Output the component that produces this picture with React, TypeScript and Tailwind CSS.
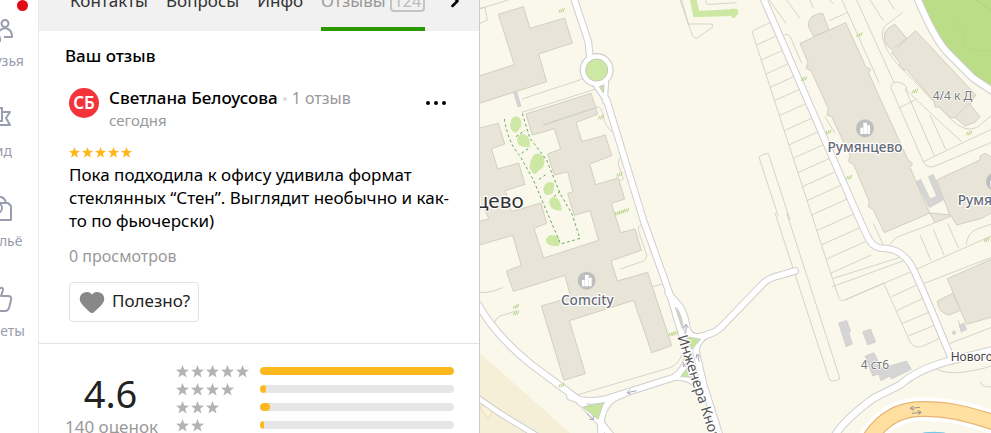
import React from "react";
import { ChevronRight, Heart } from "lucide-react";

const navItems = [
  {
    label: "Друзья",
    paths: ["M5-10a3 3 0 1 1 0 7a3 3 0 1 1 0-7", "M-1 1Q4-3 8-1Q12 1 12 7H4", "M-6-5a3 3 0 1 1 0 7a3 3 0 1 1 0-7", "M-13 11Q-13 5-6 5T0 11Z"],
  },
  { label: "Гид", paths: ["M3-8H10L6-2L10 5H-4V1", "M-11 12V-12H2V1H-11"] },
  {
    label: "Жильё",
    paths: ["M-11-7H8L11-4V10H-11Z", "M-5-7Q-4-13 1-13Q5-12 6-7", "M-3-7a5 5 0 1 1 0 10a5 5 0 1 1 0-10"],
  },
  { label: "Советы", paths: ["M-12-3H-7L-1-11Q3-14 3-10L1-4H8Q12-4 11 0L9 8Q8 11 5 11H-12Z"] },
];

const tabs = ["Контакты", "Вопросы", "Инфо"];

const ratings = [
  { stars: 5, share: 100 },
  { stars: 4, share: 3 },
  { stars: 3, share: 5 },
  { stars: 2, share: 2 },
];

function Stars({ count, className }: { count: number; className: string }) {
  return (
    <span className={`flex ${className}`} role="img" aria-label={`${count} из 5`}>
      {Array.from({ length: count }, (_, i) => (
        <svg key={i} viewBox="0 0 24 24" className="h-full w-auto" fill="currentColor">
          <path d="M12 0l3.2 8.4 8.8.4-7 5.5 2.5 8.9L12 18.2 4.5 23.2 7 14.3 0 8.8l8.8-.4z" />
        </svg>
      ))}
    </span>
  );
}

function Sidebar() {
  return (
    <nav className="relative -ml-[38px] w-[77px] shrink-0 overflow-hidden border-r border-[#e9e9ec] bg-white pt-4">
      <span className="absolute top-0 right-[10px] size-[11px] rounded-full bg-[#e30b13]" />
      {navItems.map(({ label, paths }) => (
        <a key={label} href="#" className="flex h-[90px] flex-col items-center gap-[7px] text-sm text-[#9a9caf]">
          <svg viewBox="-14 -14 28 28" className="size-7" fill="none" stroke="currentColor" strokeWidth="2" strokeLinejoin="round">
            {paths.map((d) => <path key={d} d={d} />)}
          </svg>
          <span className="leading-5">{label}</span>
        </a>
      ))}
    </nav>
  );
}

function Tabs() {
  return (
    <div className="flex h-[31px] shrink-0 items-end gap-[18px] overflow-hidden bg-[#f1f1f1] pr-[14px] pl-[31px]">
      {tabs.map((t) => (
        <button key={t} className="h-[60px] text-[17px] text-[#333]">{t}</button>
      ))}
      <button className="flex h-[60px] items-center gap-1 border-b-4 border-[#2b9900] pt-1 text-[17px] text-[#999]">
        Отзывы
        <span className="rounded border-2 border-[#c4c4c4] px-[2px] text-base leading-[18px] text-[#bbb]">124</span>
      </button>
      <button aria-label="Далее" className="ml-auto flex h-[60px] items-center text-black">
        <ChevronRight className="size-5" strokeWidth={3} />
      </button>
    </div>
  );
}

function Review() {
  return (
    <section className="border-b border-[#e2e2e2] pr-6 pb-[21px] pl-[30px] text-[17px]">
      <h2 className="-ml-1 pt-[13px] leading-6 font-medium text-black">Ваш отзыв</h2>
      <div className="mt-[18px] flex gap-[10px] pr-2">
        <div className="mt-[2px] flex size-[30px] shrink-0 items-center justify-center rounded-full bg-[#f5333b] font-semibold text-white">СБ</div>
        <div className="flex-1">
          <p className="leading-6 text-[#999]">
            <span className="font-medium text-black">Светлана Белоусова</span>
            <span className="mx-[5px] inline-block size-1 rounded-full bg-[#ddd] align-middle" />
            <span className="text-base leading-6">1 отзыв</span>
          </p>
          <p className="text-[15px] leading-[21px] text-[#999]">сегодня</p>
        </div>
        <button aria-label="Ещё" className="flex h-[34px] items-center text-black">
          <svg viewBox="0 0 22 6" className="h-[6px] w-[22px]" fill="currentColor">
            <circle cx="3" cy="3" r="2" />
            <circle cx="11" cy="3" r="2" />
            <circle cx="19" cy="3" r="2" />
          </svg>
        </button>
      </div>
      <Stars count={5} className="mt-4 h-[11px] gap-[2px] text-[#ffb81c]" />
      <p className="mt-[5px] leading-[23px] text-black">
        Пока подходила к офису удивила формат стеклянных “Стен”. Выглядит необычно и как-то по фьючерски)
      </p>
      <p className="mt-3 text-base leading-6 text-[#999]">0 просмотров</p>
      <button className="mt-[14px] flex h-10 items-center gap-[6px] rounded border border-[#e2e2e2] px-2 text-[#222]">
        <Heart className="size-7" fill="#888" stroke="#888" strokeWidth={1} />
        <span className="pb-[3px]">Полезно?</span>
      </button>
    </section>
  );
}

function Summary() {
  return (
    <section className="flex pt-[18px] pr-[25px] pl-[26px]">
      <div className="w-[91px] text-center">
        <p className="pt-[9px] text-[38px] leading-[44px] text-[#222]">4.6</p>
        <p className="text-[17px] leading-6 whitespace-nowrap text-[#999]">140 оценок</p>
      </div>
      <ul className="ml-5 flex-1">
        {ratings.map((r) => (
          <li key={r.stars} className="flex h-[18px] items-center">
            <span className="w-21 shrink-0">
              <Stars count={r.stars} className="h-[13px] gap-[2px] text-[#b3b3b3]" />
            </span>
            <span className="h-2 flex-1 overflow-hidden rounded bg-[#e6e6e6]">
              <span className="block h-2 rounded bg-[#ffb81c]" style={{ width: `${r.share}%` }} />
            </span>
          </li>
        ))}
      </ul>
    </section>
  );
}

const buildings = [
  "M55 43L130 20 150 85 254 54 277 129 176 162 200 245-5 311V229L103 194Z",
  "M-5 385L55 370 74 432 34 446 53 507 116 489 135 553 76 572 94 635 183 609 200 670 162 685 191 774 356 721 330 632 283 646 263 580 279 575 263 515 223 525 203 462 242 447 223 386 157 405 138 342 333 280 353 343 288 367 306 425 376 405 395 467 329 492 347 554 415 534 434 597 394 610 422 698 465 687 484 751 393 782 412 843 503 817 575 1037 515 1058 461 901 268 962 316 1121 252 1141 184 918 272 892 255 826 100 874 79 813 124 796 98 706-5 736V664L27 657 12 625-5 630Z",
  "M1000 108L985 78Q985 42 1028 40L1048 92Z",
  "M960 130L1097 68 1157 200 1172 208 1166 220 1284 480 1298 490 1290 502 1347 635 1365 668 1410 650 1400 620 1370 540 1500 480 1500 468 1515 460 1540 475V635L1505 655 1430 675 1412 645 1350 639 1213 698 1180 630 1165 620 1168 605 1122 495 1106 485 1110 468 1055 350 1041 345 1045 325 993 212 978 205 984 187Z",
  "M1280 115L1245 73Q1200 90 1218 132L1235 150Z",
  "M1235 158L1307 92 1487 285 1472 310 1425 352 1412 354 1378 320 1366 322 1363 305 1280 209 1270 210 1258 198 1260 188Z",
  "M1425 352L1468 310 1500 350 1486 366 1455 378Z",
  "M1402 836L1540 775V950L1460 973 1442 932Z",
  "M1372 903L1418 880 1442 930 1408 945Q1375 940 1372 903Z",
];

const roads: [string, number][] = [
  ["M280-10L325 125 330 175", 17],
  ["M350 255L380 300 490 660 570 884 610 1020", 17],
  ["M375 305L379 245", 11],
  ["M565 880L600 920Q615 945 620 980T660 1010Q695 1005 720 985L850 850Q865 835 900 826L945 813", 17],
  ["M690 1000Q650 1015 648 1055L670 1150 720 1310", 17],
  ["M-5 915Q50 1010 150 1090L270 1180Q320 1215 400 1315", 18],
  ["M270 1190Q330 1215 400 1190L580 1133Q615 1115 630 1050", 17],
  ["M580 1133Q640 1128 665 1180", 13],
  ["M365 1310Q350 1205 430 1183", 17],
  ["M-5 1195L60 1240 175 1310", 14],
  ["M850-5L1130 639 1160 705Q1175 740 1200 744C1240 745 1265 755 1290 790Q1305 810 1412 1070", 17],
  ["M1310-10Q1360 110 1400 155L1480 235 1540 275", 18],
  ["M1060 1315Q1085 1265 1180 1195L1260 1155Q1310 1110 1400 1085L1540 1050", 19],
];

const thinLines = [
  "M126 297L305 238M126 337L345 268M190 375L350 320Q365 320 370 350T400 398",
  "M0 26L85 0M0 25 15 22 22 60 0 70",
  "M430 470Q412 475 415 495L428 530Q433 545 418 540",
  "M485 675Q472 676 476 695L500 765Q500 780 485 785L420 808M520 860L545 852",
  "M0 877Q20 882 68 863M43 975Q45 950 70 945L112 932M280 1188L570 1103Q600 1090 608 1055",
  "M600 0L635 100Q640 120 655 112L697 82V72H625L605 0M678 0Q675 15 690 13L770 8",
  "M818 95Q810 95 870 68M816 95L1075 890Q1080 905 1095 900L1210 850",
  "M895 650L838 475Q835 465 865 460L930 660M885 639L1047 1135Q1050 1150 1078 1138V1130L920 639",
  "M868 0L918 70M920 0L960 55M990 0L1000 25M1050 0L1060 12M1086 0L1197 248M1048 62L1103 37M1130 0L1243 250M1170 0L1210 62M1225 0L1243 28",
  "M910 108Q925 95 933 115L965 190M1035 350L1065 400",
  "M1268 37L1215 78Q1200 95 1213 130Q1225 170 1290 230L1400 345Q1460 410 1500 375L1540 342",
  "M1232 262Q1237 240 1260 248T1280 270L1310 300Q1400 385 1445 425M1232 262L1330 485Q1340 505 1360 500L1540 425M1330 485L1540 385M1255 325L1305 300M1275 265L1363 467M1350 345L1398 450",
  "M1055 861L1290 775M1060 835L1260 772M1095 900L1300 812 1540 705M1320 855L1540 770",
  "M1210 847L1290 1025Q1300 1045 1325 1040L1385 1012M1235 890L1315 853M1250 932L1330 895M1267 970L1345 938M1285 1008L1365 975",
  "M1320 705L1353 782M1360 688L1392 765M1403 670L1436 745M1227 740Q1240 715 1260 708L1365 668M1458 735Q1465 695 1490 688L1540 670M1180 670L1210 735",
  "M1410 1030L1540 980M1365 1105Q1400 1125 1460 1115T1540 1095M1500 1145Q1510 1165 1535 1160M1435 960L1445 1000",
];

const rungs = [135, 180, 222, 262, 302, 347, 392, 435, 475, 518, 560, 602, 645, 692, 735, 778, 820].map((y) => {
  const x = 816 + (y - 95) * 0.325;
  const end = (838 + 0.4386 * (y + 0.45 * x)) / 1.197;
  return `M${x} ${y}L${end} ${y - 0.45 * (end - x)}`;
});

const hatches = [[245, 32], [363, 352], [418, 524], [412, 640], [425, 636], [438, 632], [972, 237], [1045, 397], [1107, 533], [1138, 105], [1305, 274], [1467, 400], [574, 1003], [586, 1000], [108, 920], [108, 940], [245, 1156], [1520, 720]];

function Pin({ x, y }: { x: number; y: number }) {
  return (
    <g transform={`translate(${x} ${y})`}>
      <circle r="27" fill="#bebebe" />
      <path d="M-14-2h8v19h-8zM-5-17H6v34H-5zM7-9h8v26H7z" fill="#fff" />
    </g>
  );
}

function CityMap() {
  const label = { stroke: "#fff", strokeWidth: 7, paintOrder: "stroke", strokeLinejoin: "round" as const };
  return (
    <svg viewBox="0 0 1533 1299" preserveAspectRatio="xMinYMin slice" className="block size-full" role="img" aria-label="Карта">
      <rect width="4000" height="4000" fill="#faf8ea" />
      <path d="M-5 1055L270 1299H-5Z" fill="#f5efd8" />
      <path d="M2 1225L14 1205 40 1228 25 1258Z" fill="#fdf3da" stroke="#ebdcb5" strokeWidth="3" />
      <path d="M1320-5Q1370 110 1410 150L1490 230 1540 260V-5Z" fill="#bbdd87" />
      <path d="M1480-5L1540 35" fill="none" stroke="#b0cf80" strokeWidth="3" />
      <path d="M1410 60Q1460 80 1450 120T1540 150" fill="none" stroke="#b6d983" strokeWidth="3" />
      <g fill="none" stroke="#cbccc2" strokeWidth="2.5">
        {thinLines.concat(rungs).map((d) => <path key={d} d={d} />)}
      </g>
      <path d="M630 0H650L658 33 755 27 762 25 776 38 763 55 755 48 640 52Z" fill="#cde8a4" />
      <path d="M750 27L774 28V42L756 55Z" fill="#cde8a4" />
      <g fill="#e8e5d8" stroke="#d3cfc0" strokeWidth="3" strokeLinejoin="round">
        {buildings.map((d) => <path key={d} d={d} />)}
      </g>
      <path d="M190 375L350 322" stroke="#d0d0ce" strokeWidth="4" />
      <g fill="#d5d5d5" stroke="#cacaca" strokeWidth="2">
        <path d="M101 278L110 275 123 318 114 321Z" />
        <path d="M1309 545L1322 538 1350 597 1370 588 1345 530 1360 523 1390 600 1348 623Z" />
        <path d="M1076 969L1100 961 1112 994 1107 999 1117 1032 1098 1040Z" />
        <path d="M1148 995L1172 987 1187 1026 1163 1035Z" />
        <path d="M1155 1068L1182 1058 1205 1105 1280 1083 1294 1108 1234 1137 1230 1128 1203 1142 1196 1122 1178 1128Z" />
        <path d="M1438 976L1452 969 1460 989 1445 995Z" />
        <circle cx="1422" cy="998" r="5" />
      </g>
      <g fill="#cde8a4">
        <path d="M92 365Q98 347 112 350T123 380L108 399Q85 390 92 365Z" />
        <path d="M112 413Q120 397 137 405T148 440Q108 445 112 413Z" />
        <path d="M150 490Q158 455 180 462T190 500L165 523Q145 515 150 490Z" />
        <path d="M190 565Q197 545 213 546T218 580Q190 595 190 565Z" />
        <path d="M208 605Q210 590 225 592T246 632Q208 632 208 605Z" />
        <path d="M197 720Q205 702 222 706L238 715V737Q200 742 197 720Z" />
      </g>
      <path d="M73 357Q85 430 120 468L160 540 240 728M127 341L150 415 200 480 240 580 275 640 300 715 240 733M108 410L135 390M125 460L152 440M177 538L203 520M222 590L245 570" fill="none" stroke="#5da857" strokeWidth="3" strokeDasharray="8 8" />
      <g fill="none" strokeLinecap="round" strokeLinejoin="round">
        {roads.map(([d, w]) => <path key={d} d={d} stroke="#cfced0" strokeWidth={w + 6} />)}
        <circle cx="350" cy="210" r="41" stroke="#cfced0" strokeWidth="20" />
        {roads.map(([d, w]) => <path key={d} d={d} stroke="#fff" strokeWidth={w} />)}
        <circle cx="350" cy="210" r="40" stroke="#fff" strokeWidth="15" />
      </g>
      <circle cx="350" cy="210" r="33" fill="#cde8a4" stroke="#c4cdb5" strokeWidth="3" />
      <g fill="#c7e59b" stroke="#c9cfc0" strokeWidth="3">
        <path d="M358 260L372 258 370 279Z" />
        <path d="M308 1221L370 1209 354 1258Z" />
        <path d="M602 1130L628 1096 641 1131Z" />
        <path d="M620 1010L662 1018 635 1048Z" />
        <path d="M586 922L598 947 607 985Z" />
      </g>
      <g fill="none" strokeLinecap="round">
        <path d="M1160 1330Q1220 1225 1330 1227C1400 1227 1450 1237 1550 1270" stroke="#fff" strokeWidth="70" />
        <path d="M1160 1330Q1220 1225 1330 1227C1400 1227 1450 1237 1550 1270" stroke="#e8b473" strokeWidth="48" />
        <path d="M1160 1330Q1220 1225 1330 1227C1400 1227 1450 1237 1550 1270" stroke="#ffe0a1" strokeWidth="41" />
      </g>
      <ellipse cx="1362" cy="1302" rx="38" ry="7" fill="#73c9e6" />
      <path d="M1320 1222L1292 1225M1300 1218L1290 1225 1302 1231M1296 1240L1323 1237M1313 1231L1324 1237 1314 1244" fill="none" stroke="#9c968c" strokeWidth="3" />
      <path d="M470 1172L442 1178M451 1168L441 1178 453 1183M320 1240L340 1258M340 1247V1259L328 1258M618 998V972M611 984L618 972 625 984M658 1085L652 1062M648 1075L651 1062 661 1070M625 1080L610 1098M610 1086V1099L622 1097" fill="none" stroke="#a9aac2" strokeWidth="3" />
      <g stroke="#b6d38d" strokeWidth="3">
        {hatches.map(([x, y]) => <path key={`${x}-${y}`} d={`M${x - 8} ${y + 6}l4-10M${x - 2} ${y + 6}l4-12M${x + 4} ${y + 4}l4-12`} />)}
      </g>
      <Pin x={320} y={842} />
      <Pin x={1155} y={385} />
      <Pin x={1545} y={545} />
      <g fontFamily='"Noto Sans", sans-serif' fill="#666b78" {...label}>
        <text x="322" y="915" fontSize="41" fontWeight="500" textAnchor="middle">Comcity</text>
        <text x="1155" y="457" fontSize="41" fontWeight="500" textAnchor="middle">Румянцево</text>
        <text x="1433" y="614" fontSize="41" fontWeight="500">Румянцево</text>
        <g strokeWidth="4" fill="#777">
          <text x="1358" y="299" fontSize="36">4/4 к Д</text>
          <text x="1142" y="1106" fontSize="36">4 ст6</text>
        </g>
        <text x="1412" y="1082" fontSize="36" fill="#444">Новогорская</text>
        <text x="131" y="623" fontSize="62" textAnchor="end" fill="#333">Румянцево</text>
        <text transform="translate(592 1010) rotate(72)" fontSize="43" fill="#555">Инженера Кнорре</text>
      </g>
    </svg>
  );
}

export default function App() {
  return (
    <div className="flex h-screen overflow-hidden bg-white font-['Noto_Sans',sans-serif]">
      <Sidebar />
      <main className="flex w-[440px] shrink-0 flex-col overflow-hidden">
        <Tabs />
        <Review />
        <Summary />
      </main>
      <div className="min-w-0 flex-1 overflow-hidden border-l border-[#cfcec4]">
        <CityMap />
      </div>
    </div>
  );
}
